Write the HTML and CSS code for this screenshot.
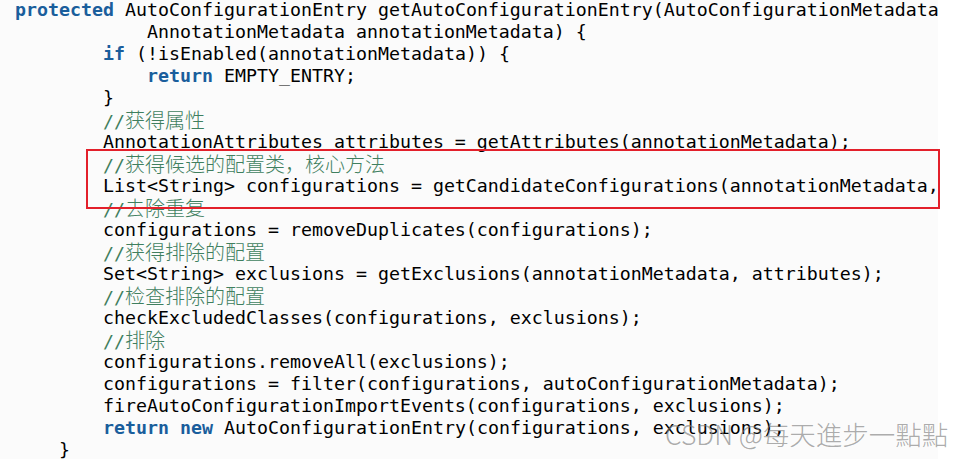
FILE: index.html
```html
<!DOCTYPE html>
<html lang="zh">
<head>
<meta charset="utf-8">
<title>getAutoConfigurationEntry</title>
<link rel="stylesheet" href="styles.css">
</head>
<body>
<div class="page">
  <div class="panel">
    <div class="code">
      <div class="ln"><span class="kw">protected</span> AutoConfigurationEntry getAutoConfigurationEntry(AutoConfigurationMetadata</div>
      <div class="ln">            AnnotationMetadata annotationMetadata) {</div>
      <div class="ln">        <span class="kw">if</span> (!isEnabled(annotationMetadata)) {</div>
      <div class="ln">            <span class="kw">return</span> EMPTY_ENTRY;</div>
      <div class="ln">        }</div>
      <div class="ln">        <span class="cm">//<span class="cjk">获得属性</span></span></div>
      <div class="ln">        AnnotationAttributes attributes = getAttributes(annotationMetadata);</div>
      <div class="ln">        <span class="cm">//<span class="cjk">获得候选的配置类，核心方法</span></span></div>
      <div class="ln">        List&lt;String&gt; configurations = getCandidateConfigurations(annotationMetadata,</div>
      <div class="ln">        <span class="cm">//<span class="cjk">去除重复</span></span></div>
      <div class="ln">        configurations = removeDuplicates(configurations);</div>
      <div class="ln">        <span class="cm">//<span class="cjk">获得排除的配置</span></span></div>
      <div class="ln">        Set&lt;String&gt; exclusions = getExclusions(annotationMetadata, attributes);</div>
      <div class="ln">        <span class="cm">//<span class="cjk">检查排除的配置</span></span></div>
      <div class="ln">        checkExcludedClasses(configurations, exclusions);</div>
      <div class="ln">        <span class="cm">//<span class="cjk">排除</span></span></div>
      <div class="ln">        configurations.removeAll(exclusions);</div>
      <div class="ln">        configurations = filter(configurations, autoConfigurationMetadata);</div>
      <div class="ln">        fireAutoConfigurationImportEvents(configurations, exclusions);</div>
      <div class="ln">        <span class="kw">return</span> <span class="kw">new</span> AutoConfigurationEntry(configurations, exclusions);</div>
      <div class="ln">    }</div>
    </div>
  </div>
  <div class="highlight"></div>
  <div class="watermark">CSDN @每天進步一點點</div>
</div>
</body>
</html>
```

FILE: styles.css
```css
html, body {
  margin: 0;
  padding: 0;
  background: #ffffff;
}

.page {
  position: relative;
  width: 969px;
  height: 459px;
  overflow: hidden;
}

.panel {
  width: 938px;
  height: 459px;
  background: #fbfbfb;
  overflow: hidden;
}

.code {
  margin-top: -1px;
  padding-left: 15px;
  font-family: "DejaVu Sans Mono", "Noto Sans CJK SC", monospace;
  font-size: 18.27px;
  color: #000000;
}

.ln {
  height: 22px;
  line-height: 22px;
  white-space: pre;
}

.kw {
  color: #1a5e9c;
  font-weight: bold;
}

.cm {
  color: #3f7f5f;
}

.cjk {
  font-family: "Noto Sans CJK SC", sans-serif;
  font-size: 20px;
  font-weight: 300;
  line-height: 22px;
}

.highlight {
  position: absolute;
  left: 86px;
  top: 149px;
  width: 850px;
  height: 56px;
  border: 2px solid #e3202b;
}

.watermark {
  position: absolute;
  left: 665px;
  top: 416px;
  font-family: "Noto Sans CJK SC", sans-serif;
  font-size: 26.5px;
  font-weight: 300;
  line-height: 36px;
  color: rgba(125, 125, 125, 0.65);
  white-space: nowrap;
}
```
